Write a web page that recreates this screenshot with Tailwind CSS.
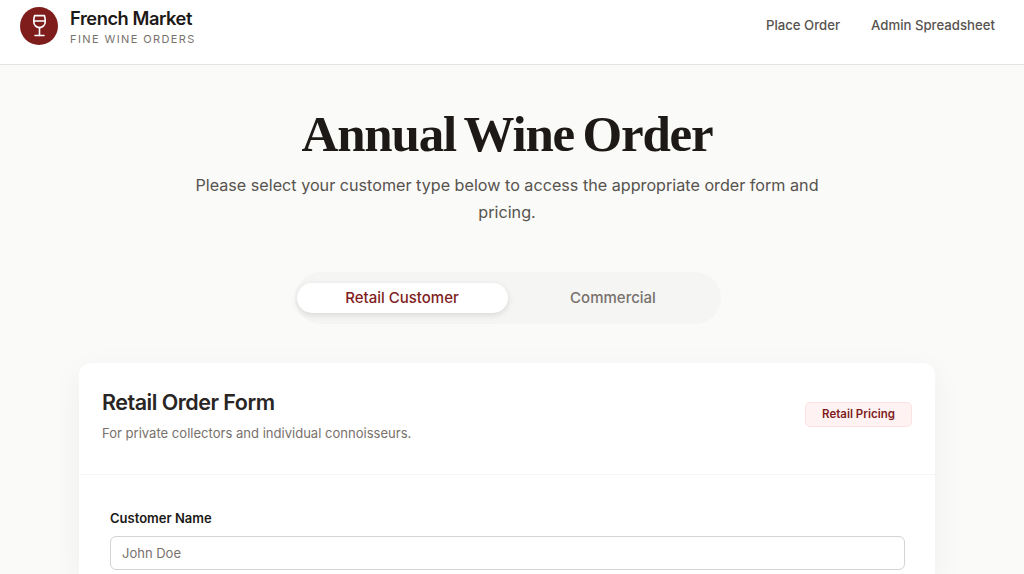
<!DOCTYPE html>
<html lang="en">
<head>
<meta charset="utf-8">
<title>French Market</title>
<script src="https://cdn.jsdelivr.net/npm/@tailwindcss/browser@4"></script>
</head>
<body class="h-[574px] overflow-hidden bg-[#fafaf8] font-['Inter',sans-serif] text-[#1c1917]">
<header class="flex h-[65px] items-center justify-between border-b border-[#e5e5e3] bg-white pr-[29px] pb-[12px] pl-5">
  <div class="flex items-center gap-[12px]">
    <div class="flex h-[38px] w-[38px] items-center justify-center rounded-full bg-[#7f1d1d]">
      <svg class="h-[38px] w-[38px]" viewBox="0 0 38 38" fill="none" stroke="white" stroke-width="1.6" stroke-linecap="round" stroke-linejoin="round"><path d="M14.6 8.6h9.8c.6 2 .9 4.100.8 6.300a5.500 5.500 0 0 1-11.400 0c-.1-2.200.2-4.300.8-6.300z"/><path d="M14 14h11"/><path d="M19.500 20.500V28.500"/><path d="M15 28.500h9"/></svg>
    </div>
    <div class="flex flex-col">
      <span class="text-[18.3px] leading-[24px] font-semibold tracking-[-0.45px] text-[#1c1917]">French Market</span>
      <span class="mt-[2px] text-[11px] leading-[15px] tracking-[1.4px] text-[#78716c]">FINE WINE ORDERS</span>
    </div>
  </div>
  <nav class="flex items-center gap-[31px] text-[13.2px] font-medium text-[#57534e]">
    <a>Place Order</a>
    <a>Admin Spreadsheet</a>
  </nav>
</header>
<main class="flex w-[1014px] flex-col items-center">
  <h1 class="mt-[39px] font-['Liberation_Serif',serif] text-[51px] leading-[60px] font-bold tracking-[-1.2px] text-[#1c1917] [word-spacing:-3px]">Annual Wine Order</h1>
  <p class="mt-[8px] w-[660px] text-center text-[16.16px] leading-[27px] text-[#57534e]">Please select your customer type below to access the appropriate order form and pricing.</p>
  <div class="mt-[46px] ml-[1px] flex h-[52px] w-[426px] items-center rounded-full bg-[#f5f5f4] px-[2px]">
    <button class="h-[30px] w-[211px] rounded-full bg-white pt-[1px] text-[15px] font-medium text-[#7f1d1d] shadow-[0_2px_6px_rgba(0,0,0,0.12)]">Retail Customer</button>
    <button class="h-[30px] w-[211px] rounded-full pt-[1px] text-[15px] font-medium text-[#78716c]">Commercial</button>
  </div>
  <section class="mt-[39px] h-[211px] w-[856px] shrink-0 rounded-t-[12px] bg-white shadow-[0_8px_30px_rgba(0,0,0,0.05)]">
    <div class="flex h-[112px] items-center justify-between border-b border-[#f5f5f4] px-[23px] pb-[7px]">
      <div class="flex flex-col">
        <h2 class="text-[21.5px] leading-[28px] font-semibold tracking-[-0.5px] text-[#292524]">Retail Order Form</h2>
        <p class="mt-[8px] text-[13.05px] leading-[18px] text-[#78716c]">For private collectors and individual connoisseurs.</p>
      </div>
      <span class="mb-[2px] flex h-[25px] w-[107px] items-center justify-center rounded-[5px] border border-[#fee2e2] bg-[#fef2f2] pt-[1px] text-[11.5px] font-semibold text-[#7f1d1d]">Retail Pricing</span>
    </div>
    <div class="pt-[36px] pr-[30px] pl-[31px]">
      <label class="block text-[13px] leading-[14px] font-semibold text-[#1c1917]">Customer Name</label>
      <div class="mt-[11px] flex h-[34px] items-center rounded-[6px] border border-[#d6d3d1] bg-white px-[11px] pt-[1px] text-[13px] text-[#78716c]">John Doe</div>
    </div>
  </section>
</main>
</body>
</html>
